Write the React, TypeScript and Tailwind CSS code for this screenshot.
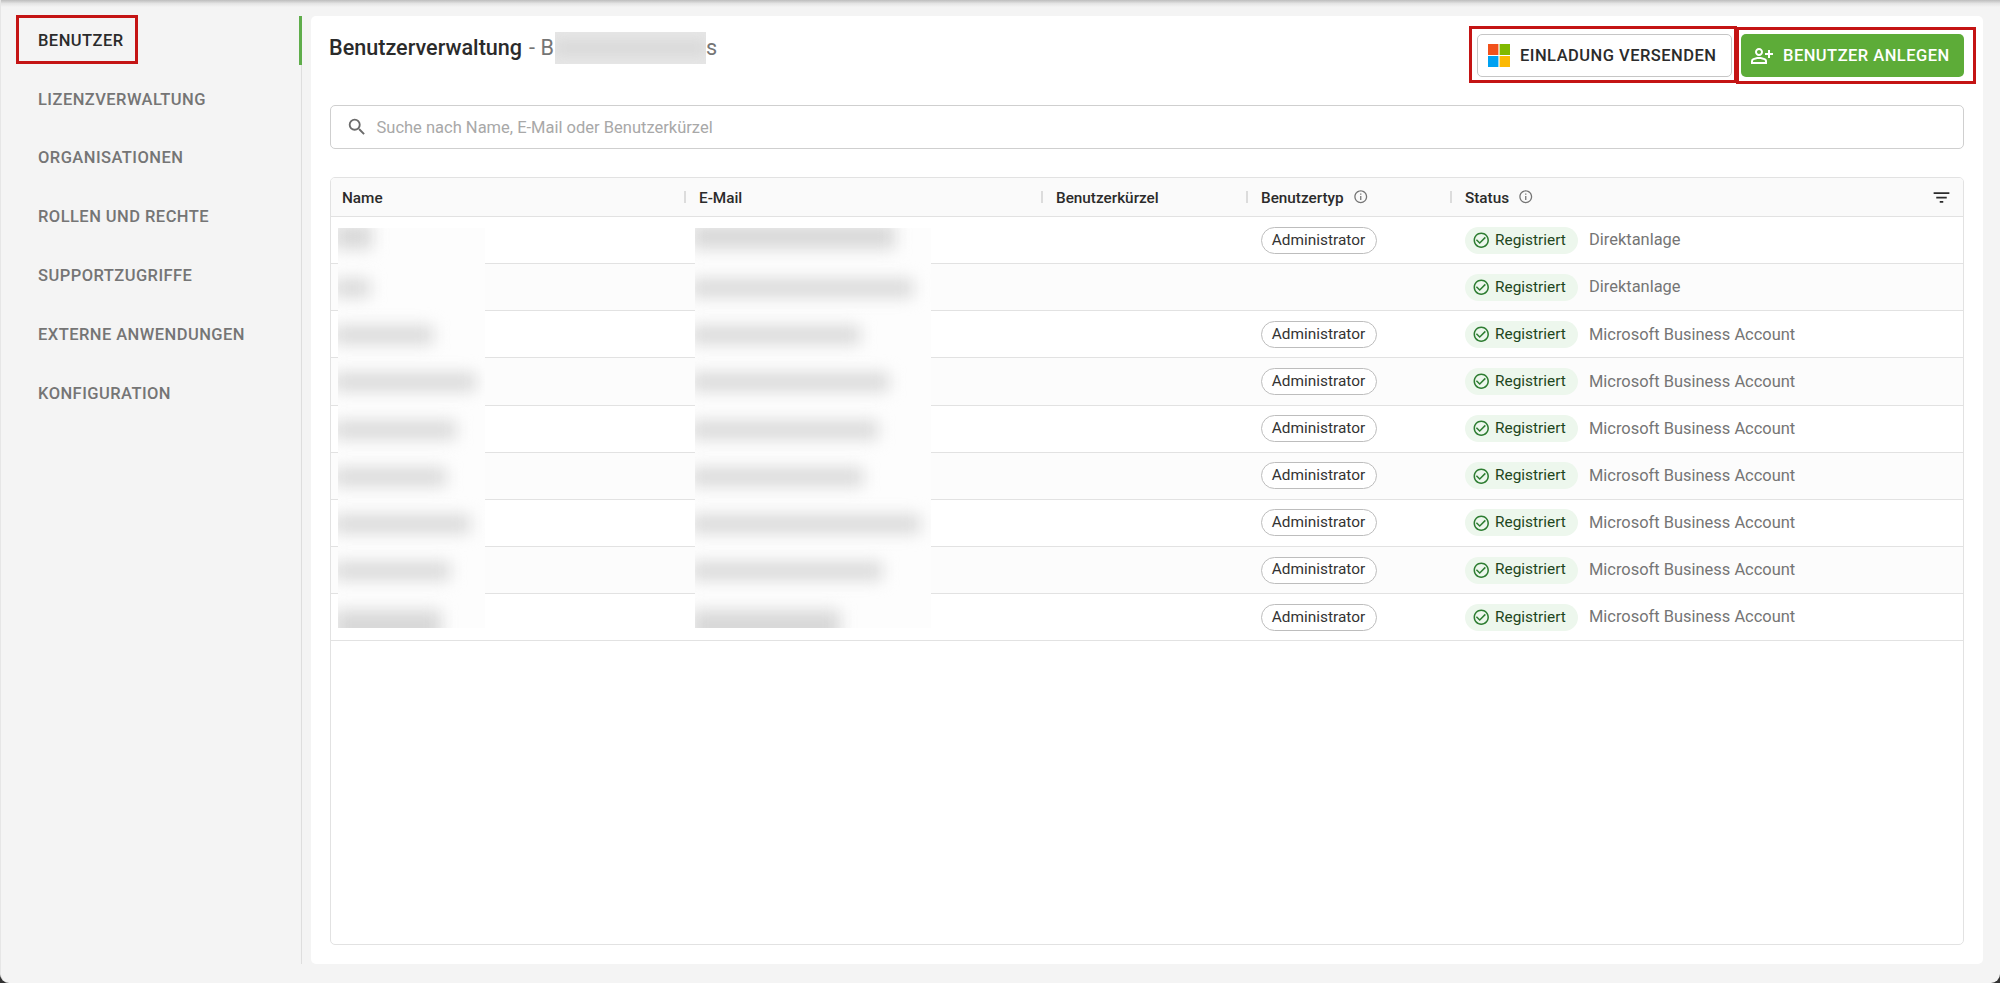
import clsx from 'clsx';
import {
    MdCheckCircleOutline,
    MdFilterList,
    MdInfoOutline,
    MdOutlinePersonAddAlt,
    MdSearch,
} from 'react-icons/md';

const navItems = [
    'Benutzer',
    'Lizenzverwaltung',
    'Organisationen',
    'Rollen und Rechte',
    'Supportzugriffe',
    'Externe Anwendungen',
    'Konfiguration',
];

interface UserRow {
    admin: boolean;
    source: string;
    // widths of the redacted name and e-mail in px
    name: number;
    email: number;
}

const MS = 'Microsoft Business Account';

const users: UserRow[] = [
    { admin: true, source: 'Direktanlage', name: 34, email: 200 },
    { admin: false, source: 'Direktanlage', name: 32, email: 218 },
    { admin: true, source: MS, name: 95, email: 165 },
    { admin: true, source: MS, name: 138, email: 194 },
    { admin: true, source: MS, name: 118, email: 183 },
    { admin: true, source: MS, name: 108, email: 168 },
    { admin: true, source: MS, name: 132, email: 225 },
    { admin: true, source: MS, name: 112, email: 187 },
    { admin: true, source: MS, name: 103, email: 145 },
];

const columns = 'grid grid-cols-[357px_357px_205px_204px_1fr]';

function MicrosoftLogo() {
    return (
        <svg width="22" height="23" viewBox="0 0 22 23">
            <path fill="#f1511b" d="M0 0h10.4v11H0z" />
            <path fill="#80b900" d="M11.6 0H22v11H11.6z" />
            <path fill="#00a1f1" d="M0 12h10.4v11H0z" />
            <path fill="#fbb904" d="M11.6 12H22v11H11.6z" />
        </svg>
    );
}

function Sidebar() {
    return (
        <nav className="mt-4 mb-[19px] w-[301px] shrink-0 border-r border-[#dedede]">
            {navItems.map((item, i) => (
                <div
                    key={item}
                    className={clsx(
                        'relative mb-[9.9px] flex h-[49px] items-center pt-px pl-[37px] text-[16.5px] font-medium tracking-[0.45px] uppercase',
                        i === 0 ? 'text-[#2b2b2b]' : 'text-[#757575]'
                    )}
                >
                    {item}
                    {i === 0 && (
                        <>
                            <span className="absolute top-0 -right-px h-[49px] w-[3px] bg-[#5fad4b]" />
                            <span className="absolute -top-px left-[15px] h-[49px] w-[122px] border-3 border-[#c41414]" />
                        </>
                    )}
                </div>
            ))}
        </nav>
    );
}

function HeaderCell({
    label,
    info,
    divider = true,
}: {
    label: string;
    info?: boolean;
    divider?: boolean;
}) {
    return (
        <div className="flex items-center pl-[11px]">
            <span className="pt-[2px]">{label}</span>
            {info && (
                <MdInfoOutline className="ml-[9px] size-[15.5px] text-[#757575]" />
            )}
            {divider && (
                <span className="mr-[2px] ml-auto h-3 w-[2px] bg-[#dcdcdc]" />
            )}
        </div>
    );
}

function Redacted({
    field,
    className,
}: {
    field: 'name' | 'email';
    className: string;
}) {
    return (
        <div
            className={clsx(
                'absolute top-[11px] h-[400px] overflow-hidden bg-[#fdfdfd]',
                className
            )}
        >
            {users.map((user, i) => (
                <div
                    key={i}
                    className={clsx(
                        '-ml-1 h-[47.15px]',
                        i === 0 && '-mt-[11px]'
                    )}
                >
                    <div
                        className={clsx(
                            'relative bg-[#d8d8d8] blur-[8px]',
                            i === 0 && 'top-[7px] h-[25px]',
                            i > 0 && i < 8 && 'top-[15px] h-[18px]',
                            i === 8 && 'top-4 h-8'
                        )}
                        style={{ width: user[field] + 4 }}
                    />
                </div>
            ))}
        </div>
    );
}

function UserTable() {
    return (
        <div className="flex grow flex-col overflow-hidden rounded-[5px] border border-[#e2e2e2] text-[15.3px]">
            <div
                className={clsx(
                    columns,
                    'h-[39px] shrink-0 border-b border-[#e2e2e2] bg-[#fafafa] font-medium text-[#2b2b2b]'
                )}
            >
                <HeaderCell label="Name" />
                <HeaderCell label="E-Mail" />
                <HeaderCell label="Benutzerkürzel" />
                <HeaderCell label="Benutzertyp" info />
                <div className="flex items-center justify-between pr-[11px]">
                    <HeaderCell label="Status" info divider={false} />
                    <MdFilterList className="size-[21px]" />
                </div>
            </div>
            <div className="relative">
                {users.map((user, i) => (
                    <div
                        key={i}
                        className={clsx(
                            columns,
                            'h-[47.15px] items-center border-b border-[#e2e2e2]',
                            i % 2 === 1 && 'bg-[#fcfcfc]'
                        )}
                    >
                        <div className="col-start-4 flex pl-[10.5px]">
                            {user.admin && (
                                <span className="flex h-[27px] w-[116px] items-center justify-center rounded-full border border-[#bdbdbd] bg-white text-[15.4px] text-[#333]">
                                    Administrator
                                </span>
                            )}
                        </div>
                        <div className="col-start-5 flex items-center pl-[10.5px]">
                            <span className="flex h-[27px] w-[113px] items-center rounded-full bg-[#edf7ed] pl-[7px] text-[15.4px] text-[#1e4620]">
                                <MdCheckCircleOutline className="mr-[5px] size-[18.5px] text-[#2e7d32]" />
                                Registriert
                            </span>
                            <span className="ml-[11.5px] pt-px text-[16.45px] text-[#757575]">
                                {user.source}
                            </span>
                        </div>
                    </div>
                ))}
                <Redacted field="name" className="left-[7px] w-[147px]" />
                <Redacted field="email" className="left-[364px] w-[236px]" />
            </div>
        </div>
    );
}

export default function App() {
    return (
        <div className="h-[983px] w-[2000px] bg-[#333] font-[Roboto,sans-serif]">
            <div className="relative flex h-full overflow-hidden rounded-b-[9px] border-l border-[#e6e6e6] bg-[#f4f4f4]">
                {/* shadow of the app bar above */}
                <div className="absolute inset-x-0 top-0 h-[7px] bg-linear-to-b from-[#bdbdbd] via-[#e4e4e4] to-transparent" />
                <Sidebar />
                <main className="mt-4 mr-[17px] mb-[19px] ml-[9px] flex grow flex-col rounded-[5px] bg-white px-[19px] pb-[19px]">
                    <div className="flex h-[89px] items-start justify-between">
                        <h1 className="mt-4 -ml-px flex h-8 items-center text-[21.6px] font-medium text-[#2b2b2b]">
                            Benutzerverwaltung
                            <span className="ml-[7px] flex items-center font-normal text-[#757575]">
                                - B
                                <span className="ml-px h-8 w-[151px] overflow-hidden bg-[#e6e6e6]">
                                    <span className="mt-2 block h-4 bg-[#dadada] blur-[6px]" />
                                </span>
                                s
                            </span>
                        </h1>
                        <div className="mt-[18px] flex gap-[9px]">
                            <button className="relative flex h-[43px] w-[255px] items-center rounded-[5px] border border-[#c6c6c6] pl-[10px] text-[16.5px] font-medium tracking-[0.47px] text-[#2b2b2b]">
                                <MicrosoftLogo />
                                <span className="ml-[10px] pt-px">
                                    EINLADUNG VERSENDEN
                                </span>
                                <span className="absolute -top-[9px] -left-[9px] h-[57px] w-[268px] border-3 border-[#c41414]" />
                            </button>
                            <button className="relative flex h-[43px] w-[223px] items-center rounded-[5px] bg-[#5dac38] pl-[9px] text-[16.5px] font-medium tracking-[0.47px] text-white">
                                <MdOutlinePersonAddAlt className="size-6" />
                                <span className="ml-[9px] pt-px">
                                    BENUTZER ANLEGEN
                                </span>
                                <span className="absolute -top-[7px] -left-[5px] h-[57px] w-[240px] border-3 border-[#c41414]" />
                            </button>
                        </div>
                    </div>
                    <div className="mb-7 flex h-11 shrink-0 items-center rounded-[5px] border border-[#cfcfcf] pl-[15px] text-[16.5px] text-[#a8a8a8]">
                        <MdSearch className="mr-[8.5px] size-[22px] text-[#6b6b6b]" />
                        <span className="pt-[2px]">
                            Suche nach Name, E-Mail oder Benutzerkürzel
                        </span>
                    </div>
                    <UserTable />
                </main>
            </div>
        </div>
    );
}
